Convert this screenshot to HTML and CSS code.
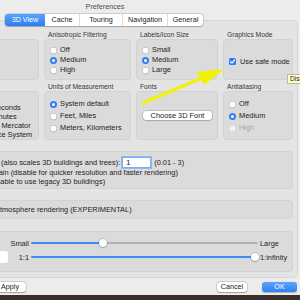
FILE: index.html
```html
<!DOCTYPE html>
<html lang="en">
<head>
  <meta charset="UTF-8" />
  <title>Preferences</title>
  <link rel="stylesheet" href="styles.css">
</head>
<body>
  <div class="window">
    <div class="titlebar">Preferences</div>

    <div class="tabs">
      <span class="tab active" style="width:40px">3D View</span>
      <span class="tab" style="width:34px">Cache</span>
      <span class="tab" style="width:43px">Touring</span>
      <span class="tab" style="width:45px">Navigation</span>
      <span class="tab" style="width:36px">General</span>
    </div>

    <div class="tabview">
      <div class="grid">
        <div class="group">
          <div class="group-label">Texture Colors</div>
          <div class="box box-top col-list">
            <div class="opt"><span class="radio"></span>High Color (16 bit)</div>
            <div class="opt"><span class="radio on"></span>True Color (32 bit)</div>
          </div>
        </div>
        <div class="group">
          <div class="group-label">Anisotropic Filtering</div>
          <div class="box box-top">
            <div class="opt"><span class="radio"></span>Off</div>
            <div class="opt"><span class="radio on"></span>Medium</div>
            <div class="opt"><span class="radio"></span>High</div>
          </div>
        </div>
        <div class="group">
          <div class="group-label">Labels/Icon Size</div>
          <div class="box box-top">
            <div class="opt"><span class="radio"></span>Small</div>
            <div class="opt"><span class="radio on"></span>Medium</div>
            <div class="opt"><span class="radio"></span>Large</div>
          </div>
        </div>
        <div class="group">
          <div class="group-label">Graphics Mode</div>
          <div class="box box-top graphics">
            <div class="opt check-opt">
              <span class="check"><svg viewBox="0 0 7 7" width="7" height="7"><path d="M1.5 3.7 L3 5.2 L5.6 1.8" fill="none" stroke="#fff" stroke-width="1.1" stroke-linecap="round" stroke-linejoin="round"/></svg></span>
              Use safe mode
            </div>
          </div>
        </div>

        <div class="group">
          <div class="group-label">Show Lat/Long</div>
          <div class="box box-mid latlong">
            <div class="opt"><span class="radio"></span>Decimal Degrees</div>
            <div class="opt"><span class="radio on"></span>Degrees, Minutes, Seconds</div>
            <div class="opt"><span class="radio"></span>Degrees, Decimal Minutes</div>
            <div class="opt"><span class="radio"></span>Universal Transverse Mercator</div>
            <div class="opt"><span class="radio"></span>Military Grid Reference System</div>
          </div>
        </div>
        <div class="group">
          <div class="group-label">Units of Measurement</div>
          <div class="box box-mid tall">
            <div class="opt"><span class="radio on"></span>System default</div>
            <div class="opt"><span class="radio"></span>Feet, Miles</div>
            <div class="opt"><span class="radio"></span>Meters, Kilometers</div>
          </div>
        </div>
        <div class="group">
          <div class="group-label">Fonts</div>
          <div class="box box-mid fonts">
            <div class="button font-button">Choose 3D Font</div>
          </div>
        </div>
        <div class="group">
          <div class="group-label">Antialiasing</div>
          <div class="box box-mid tall">
            <div class="opt"><span class="radio"></span>Off</div>
            <div class="opt"><span class="radio on"></span>Medium</div>
            <div class="opt disabled"><span class="radio"></span>High</div>
          </div>
        </div>
      </div>

      <div class="box wide terrain">
        <div class="line first">
          Elevation Exaggeration (also scales 3D buildings and trees):
          <span class="field">1</span>
          <span class="range">(0.01 - 3)</span>
        </div>
        <div class="line"><span class="cbox"></span>Use high quality terrain (disable for quicker resolution and faster rendering)</div>
        <div class="line"><span class="cbox"></span>Use 3D Imagery (disable to use legacy 3D buildings)</div>
      </div>

      <div class="box wide single">
        <div class="line"><span class="cbox"></span>Use photorealistic atmosphere rendering (EXPERIMENTAL)</div>
      </div>

      <div class="box wide overview">
        <div class="slider-row">
          <div class="lead-cell"></div>
          <span class="slider-label">Small</span>
          <div class="track">
            <span class="fill" style="width:72px"></span>
            <span class="knob"></span>
            <span class="rest"></span>
          </div>
          <span class="end-label">Large</span>
        </div>
        <div class="slider-row">
          <div class="lead-cell"><span class="well"></span></div>
          <span class="slider-label">1:1</span>
          <div class="track">
            <span class="fill" style="width:224px"></span>
            <span class="knob"></span>
            <span class="rest"></span>
          </div>
          <span class="end-label">1:infinity</span>
        </div>
      </div>
    </div>

    <div class="footer">
      <div class="button apply">Apply</div>
      <div class="spacer"></div>
      <div class="button cancel">Cancel</div>
      <div class="button ok">OK</div>
    </div>
  </div>

  <div class="tooltip">Disable advanced graphics</div>

  <svg class="arrow" viewBox="0 0 300 300" width="300" height="300">
    <line x1="143" y1="103" x2="202" y2="78" stroke="#f3f300" stroke-width="3" stroke-linecap="round"/>
    <polygon points="224,69 197,72 204,85" fill="#f3f300"/>
  </svg>
</body>
</html>
```

FILE: styles.css
```css
body {
  margin: 0;
  width: 300px;
  height: 300px;
  overflow: hidden;
  position: relative;
  background: #3a2e2b;
  font-family: "Liberation Sans", Arial, sans-serif;
  font-size: 7.4px;
  color: #1b1b1b;
}

.window {
  height: 295px;
  background: #ececec;
  display: flex;
  flex-direction: column;
}

.titlebar {
  flex: none;
  height: 14px;
  line-height: 13px;
  padding-right: 90px;
  text-align: center;
  color: #4d4d4d;
  font-size: 7.2px;
}

.tabs {
  flex: none;
  align-self: flex-start;
  display: flex;
  height: 12px;
  margin-left: 5px;
  position: relative;
  z-index: 1;
  background: #fff;
  border-radius: 3px;
  box-shadow: 0 0 0 0.5px rgba(0, 0, 0, 0.22), 0 0.5px 1px rgba(0, 0, 0, 0.2);
  font-size: 7.2px;
}

.tab {
  line-height: 12px;
  text-align: center;
  border-left: 1px solid #dcdcdc;
  box-sizing: border-box;
}

.tab.active {
  border-left: none;
  border-radius: 3px 0 0 3px;
  background: linear-gradient(#5aa3fa, #2b7ef3);
  color: #fff;
}

.tab.active + .tab {
  border-left: none;
}

.tabview {
  flex: 1;
  margin: -6px 2px 0 -95px;
  padding: 9px 4px 4px 8px;
  background: #e4e4e4;
  border: 1px solid #d6d6d6;
  border-radius: 5px;
}

.grid {
  display: grid;
  grid-template-columns: 125px 87px 82px 70px;
  column-gap: 5px;
  row-gap: 2px;
}

.group-label {
  height: 9px;
  line-height: 9px;
  padding-left: 4px;
  font-size: 6.7px;
  color: #363636;
  white-space: nowrap;
}

.box {
  box-sizing: border-box;
  background: #dbdbdb;
  border: 1px solid #d2d2d2;
  border-radius: 4px;
}

.box-top {
  height: 41px;
  padding: 5px 5px 0;
  line-height: 10px;
}

.box-mid {
  height: 49px;
  padding: 6px 5px 0;
  line-height: 12px;
}

.col-list {
  padding-top: 10px;
}

.latlong {
  padding-top: 2px;
  line-height: 9px;
}

.opt {
  display: flex;
  align-items: center;
  gap: 3px;
  white-space: nowrap;
}

.opt.disabled {
  color: #a6a6a6;
}

.radio {
  flex: none;
  display: flex;
  align-items: center;
  justify-content: center;
  width: 7px;
  height: 7px;
  border-radius: 50%;
  background: #fff;
  box-shadow: inset 0 0 0 0.5px #a8a8a8, 0 0.5px 0.5px rgba(0, 0, 0, 0.12);
}

.radio.on {
  background: #2f7ef5;
  box-shadow: none;
}

.radio.on::after {
  content: "";
  width: 3px;
  height: 3px;
  border-radius: 50%;
  background: #fff;
}

.opt.disabled .radio {
  background: #f2f2f2;
  box-shadow: inset 0 0 0 0.5px #cccccc;
}

.graphics {
  display: flex;
  align-items: center;
  padding-top: 4px;
}

.check-opt {
  gap: 4px;
}

.check {
  flex: none;
  display: flex;
  width: 7px;
  height: 7px;
  border-radius: 1.5px;
  background: #2f7ef5;
}

.fonts {
  display: flex;
  align-items: center;
  padding: 0 0 0 6px;
}

.button {
  height: 10px;
  line-height: 10px;
  text-align: center;
  background: #fff;
  border-radius: 3px;
  box-shadow: 0 0 0 0.5px rgba(0, 0, 0, 0.22), 0 0.5px 1px rgba(0, 0, 0, 0.25);
  white-space: nowrap;
}

.font-button {
  width: 69px;
  height: 9px;
  line-height: 9px;
}

.wide {
  margin-top: 11px;
  padding: 4px 0 2px 8px;
  overflow: hidden;
  white-space: nowrap;
}

.line {
  display: flex;
  align-items: center;
  gap: 3px;
  height: 9px;
}

.line.first {
  height: 12px;
  gap: 0;
}

.field {
  box-sizing: border-box;
  width: 29px;
  height: 11px;
  margin-left: 2px;
  padding-left: 3px;
  line-height: 9px;
  background: #fff;
  border: 1px solid #7aaef6;
  box-shadow: 0 0 0 1px rgba(90, 150, 240, 0.5);
}

.range {
  margin-left: 3px;
}

.cbox {
  flex: none;
  width: 7px;
  height: 7px;
  border-radius: 1.5px;
  background: #fff;
  box-shadow: inset 0 0 0 0.5px #a8a8a8;
}

.single {
  padding: 4px 0 4px 10px;
}

.overview {
  margin-top: 12px;
  padding: 4px 0 7px;
}

.slider-row {
  display: flex;
  align-items: center;
  height: 14px;
}

.lead-cell {
  flex: none;
  display: flex;
  justify-content: flex-end;
  width: 95px;
}

.well {
  width: 30px;
  height: 12px;
  margin-right: 2px;
  background: #fff;
  border-radius: 2px;
}

.slider-label {
  width: 19px;
  text-align: right;
}

.track {
  display: flex;
  align-items: center;
  width: 227px;
  height: 8px;
  margin-left: 2px;
}

.fill {
  height: 2px;
  background: #3f8bf4;
  border-radius: 1px;
}

.rest {
  flex: 1;
  height: 2px;
  background: #b3b3b3;
  border-radius: 1px;
}

.knob {
  position: relative;
  z-index: 1;
  flex: none;
  width: 8px;
  height: 8px;
  margin: 0 -4px;
  border-radius: 50%;
  background: #fff;
  box-shadow: 0 0 0 0.5px rgba(0, 0, 0, 0.18), 0 0.5px 1.5px rgba(0, 0, 0, 0.35);
}

.end-label {
  margin-left: 2px;
}

.footer {
  flex: none;
  display: flex;
  align-items: center;
  height: 17px;
  margin-left: -6px;
  padding-right: 3px;
  font-size: 7.2px;
}

.apply {
  width: 32px;
}

.spacer {
  flex: 1;
}

.cancel {
  width: 30px;
  margin-right: 15px;
}

.ok {
  width: 35px;
  color: #fff;
  background: linear-gradient(#5ca4fb, #2d7ff4);
  box-shadow: 0 0.5px 1px rgba(0, 0, 0, 0.25);
}

.tooltip {
  position: absolute;
  left: 287px;
  top: 74px;
  height: 8px;
  padding-left: 2px;
  line-height: 8px;
  font-size: 6.5px;
  white-space: nowrap;
  background: #fdfdc6;
  border: 0.5px solid #b9b9a0;
}

.arrow {
  position: absolute;
  left: 0;
  top: 0;
  pointer-events: none;
}
```
